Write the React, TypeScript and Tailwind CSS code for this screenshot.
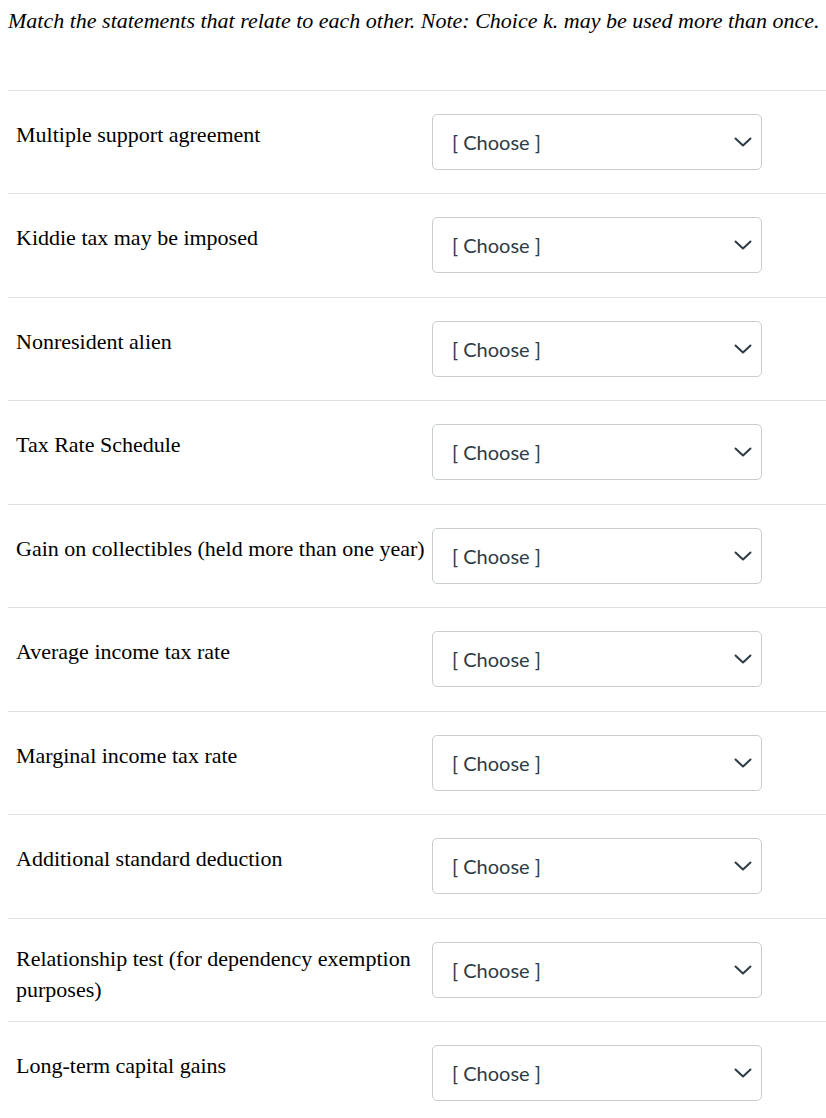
import React from 'react';

interface MatchRow {
  label: string;
  wraps?: boolean;
}

const rows: MatchRow[] = [
  { label: 'Multiple support agreement' },
  { label: 'Kiddie tax may be imposed' },
  { label: 'Nonresident alien' },
  { label: 'Tax Rate Schedule' },
  { label: 'Gain on collectibles (held more than one year)' },
  { label: 'Average income tax rate' },
  { label: 'Marginal income tax rate' },
  { label: 'Additional standard deduction' },
  { label: 'Relationship test (for dependency exemption purposes)', wraps: true },
  { label: 'Long-term capital gains' },
];

function ChooseSelect() {
  return (
    <div className="relative flex h-[56px] w-[330px] shrink-0 items-center rounded-[5px] border border-[#c7cdd1] bg-white pl-[19px] pr-[9px] font-['Lato',sans-serif] text-[20px] text-[#2d3b45]">
      <span className="flex-1">[ Choose ]</span>
      <svg width="18" height="10" viewBox="0 0 18 10" fill="none" className="shrink-0">
        <polyline points="1.5,1.5 9,8.5 16.5,1.5" stroke="#2d3b45" strokeWidth="2" strokeLinecap="round" strokeLinejoin="round" />
      </svg>
    </div>
  );
}

export default function App() {
  return (
    <div className="min-h-screen bg-white pl-2 font-['Liberation_Serif',serif] text-black">
      {/* Vorgabe-Text */}
      <p className="pt-[5px] text-[22px] italic leading-[31px]">
        Match the statements that relate to each other. Note: Choice k. may be used more than once.
      </p>

      <div className="mt-[54px]">
        {rows.map((row) => (
          <div
            key={row.label}
            className="flex items-start border-t border-[#e0e0e0] pt-[23px] pb-[23.44px]"
          >
            {/* feste Höhe: zweizeilige Labels dürfen die Zeile nicht strecken */}
            <div
              className={`h-[56px] w-[424px] shrink-0 pl-2 text-[22px] leading-[31px] ${
                row.wraps ? 'pt-[1px]' : 'pt-[5px]'
              }`}
            >
              {row.label}
            </div>
            <ChooseSelect />
          </div>
        ))}
      </div>
    </div>
  );
}
